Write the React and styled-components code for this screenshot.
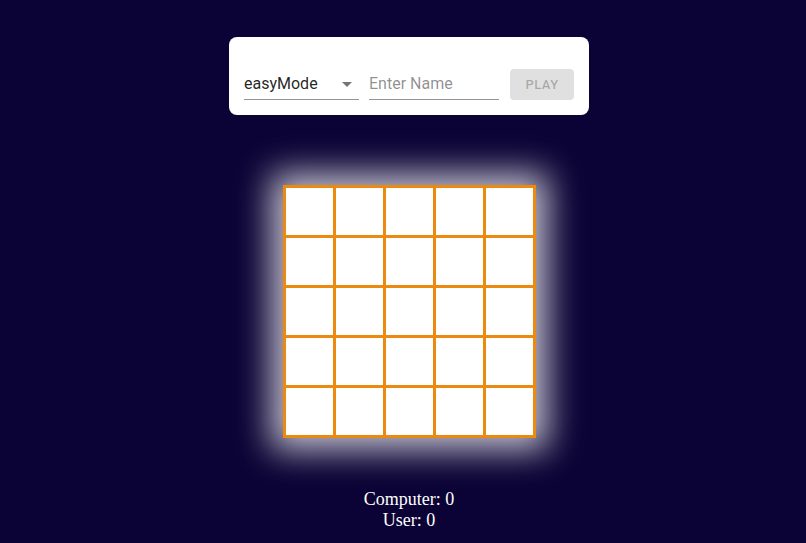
import React from "react";
import styled, { createGlobalStyle } from "styled-components";

const GlobalStyle = createGlobalStyle`
  html, body { margin: 0; padding: 0; background: #0b0335; }
  body { min-height: 543px; }
  * { box-sizing: border-box; }
`;

const Page = styled.div`
  min-height: 543px;
  padding: 37px 0 0 12px;
  display: flex;
  flex-direction: column;
  align-items: center;
  background: #0b0335;
`;

const Card = styled.div`
  width: 360px;
  height: 78px;
  background: #fff;
  border-radius: 8px;
  padding: 15px;
  display: flex;
  align-items: flex-end;
  font-family: Roboto, "Liberation Sans", sans-serif;
`;

const Field = styled.div`
  position: relative;
  width: ${(p) => p.$w}px;
  margin-right: ${(p) => p.$mr || 0}px;
  height: 32px;
  padding: 4px 0 5px;
  border-bottom: 1px solid rgba(0, 0, 0, 0.42);
  display: flex;
  align-items: center;
  font-size: 16px;
  line-height: 23px;
  color: ${(p) => (p.$placeholder ? "rgba(0,0,0,0.45)" : "rgba(0,0,0,0.87)")};
`;

const Arrow = styled.svg`
  position: absolute;
  right: 0;
  top: 4px;
  width: 24px;
  height: 24px;
  fill: rgba(0, 0, 0, 0.54);
`;

const PlayButton = styled.button`
  width: 64px;
  height: 31px;
  border: none;
  border-radius: 4px;
  background: rgba(0, 0, 0, 0.12);
  color: rgba(0, 0, 0, 0.26);
  font-family: Roboto, "Liberation Sans", sans-serif;
  font-weight: 500;
  font-size: 13px;
  letter-spacing: 0.46px;
  text-transform: uppercase;
  padding: 0;
  margin-bottom: 0;
`;

const Board = styled.div`
  margin-top: 70px;
  display: grid;
  grid-template-columns: repeat(5, 47px);
  grid-template-rows: repeat(5, 47px);
  gap: 3px;
  padding: 3px;
  background: #ec8a10;
  box-shadow: 0 0 32px 12px rgba(255, 255, 255, 0.75);
`;

const Cell = styled.div`
  background: #fff;
`;

const Score = styled.div`
  margin-top: 51px;
  font-family: "Liberation Serif", "Times New Roman", serif;
  font-size: 18px;
  color: #fff;
  text-align: center;
`;

export default function App() {
  return (
    <>
      <GlobalStyle />
      <Page>
        <Card>
          <Field $w={115} $mr={10}>
            easyMode
            <Arrow viewBox="0 0 24 24">
              <path d="M7 10l5 5 5-5z" />
            </Arrow>
          </Field>
          <Field $w={130} $mr={11} $placeholder>
            Enter Name
          </Field>
          <PlayButton disabled>Play</PlayButton>
        </Card>
        <Board>
          {Array.from({ length: 25 }).map((_, i) => (
            <Cell key={i} />
          ))}
        </Board>
        <Score>
          <div>Computer: 0</div>
          <div>User: 0</div>
        </Score>
      </Page>
    </>
  );
}
